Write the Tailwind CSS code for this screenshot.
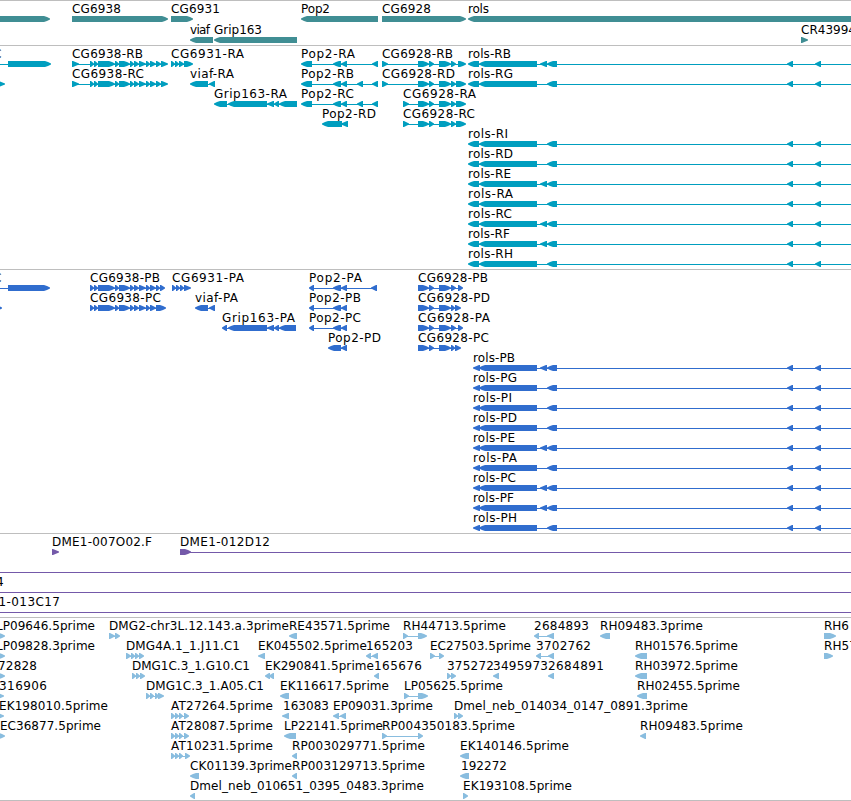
<!DOCTYPE html>
<html lang="en">
<head>
    <meta charset="UTF-8">
    <meta name="viewport" content="width=device-width, initial-scale=1.0">
    <title>Genome browser - chr3L</title>
    <script src="https://cdn.jsdelivr.net/npm/@tailwindcss/browser@4"></script>
</head>
<body class="bg-white overflow-hidden font-['DejaVu_Sans',sans-serif] text-[12px] text-black">

<main class="flex flex-col w-[851px] h-[801px] border-b border-[#bebebe]">
    <section id="genes" class="flex flex-col gap-px pt-px h-[45px] border-t border-[#bebebe] text-[#408e94]"></section>
    <section id="transcripts" class="flex flex-col pt-px h-[224px] border-t border-[#bebebe] text-[#009ebf]"></section>
    <section id="proteins" class="flex flex-col pt-px h-[264px] border-t border-[#bebebe] text-[#306dce]"></section>
    <section id="clones" class="flex flex-col pt-px h-[84px] border-t border-[#bebebe] text-[#7459a9]"></section>
    <section id="ests" class="flex flex-col pt-px h-[183px] border-t border-[#bebebe] text-[#89bddf]"></section>
</main>

<script>
    // feature: [label, x, label width, strand, 'start-end start-end ...']
    const cg6938 = '98-115 115-119 119-130 130-134 134-139 139-146 146-150 150-156 ';
    const cg6928 = '418-429 429-434 439-451 ';
    const rolsTail = '547-557 787-793 815-821 860-866';

    function rols(name, w, extra) {
        const start = name[5] === 'R' ? '468-479 479-537 ' : '473-480 479-537 ';
        return [[name, name[5] === 'R' ? 468 : 473, w, '-', start + (extra ? '540-547 ' : '') + rolsTail]];
    }

    const tracks = {
        genes: [
            [['', 0, 0, '+', '-10-50'], ['CG6938', 72, 49, '+', '72-168'], ['CG6931', 171, 49, '+', '171-193'],
                ['Pop2', 301, 29, '-', '301-378'], ['CG6928', 382, 49, '+', '382-466'], ['rols', 468, 21, '-', '468-870']],
            [['viaf', 190, 20, '-', '190-213'], ['Grip163', 214, 48, '-', '214-297'], ['CR43994', 801, 55, '+', '801-808']]
        ],
        transcripts: [
            [['C', -7, 8, '+', '-9--5 8-51'], ['CG6938-RB', 72, 71, '+', '72-79 90-94 94-98 ' + cg6938 + '156-161 161-168'],
                ['CG6931-RA', 171, 73, '+', '171-175 175-179 179-184 184-193'],
                ['Pop2-RA', 301, 54, '-', '301-312 333-341 341-347 372-378'],
                ['CG6928-RB', 382, 71, '+', '382-388 418-429 429-434 439-451 451-456 458-466'], ...rols('rols-RB', 43, true)],
            [['', 0, 0, '+', '-2-5'], ['CG6938-RC', 72, 72, '+', '72-79 90-94 94-98 ' + cg6938 + '156-161 161-168'],
                ['viaf-RA', 190, 44, '-', '190-208 209-215'],
                ['Pop2-RB', 301, 53, '-', '301-312 333-341 341-347 357-363 372-378'],
                ['CG6928-RD', 382, 73, '+', '382-388 ' + cg6928 + '451-456 456-466'], ...rols('rols-RG', 45)],
            [['Grip163-RA', 214, 73, '-', '214-227 228-267 267-274 274-279 279-297'],
                ['Pop2-RC', 301, 53, '-', '301-312 333-341 341-347 357-363 372-378'],
                ['CG6928-RA', 403, 73, '+', '403-409 ' + cg6928 + '451-456 456-466']],
            [['Pop2-RD', 322, 54, '-', '322-342 341-348'], ['CG6928-RC', 403, 72, '+', '403-409 ' + cg6928 + '451-456 456-466']],
            rols('rols-RI', 40),
            rols('rols-RD', 45),
            rols('rols-RE', 43, true),
            rols('rols-RA', 45),
            rols('rols-RC', 44, true),
            rols('rols-RF', 42, true),
            rols('rols-RH', 45)
        ],
        proteins: [
            [['C', -7, 8, '+', '-9--5 8-50'], ['CG6938-PB', 90, 70, '+', '90-94 94-98 ' + cg6938 + '156-160 160-165'],
                ['CG6931-PA', 172, 72, '+', '172-176 176-180 180-184 184-191'],
                ['Pop2-PA', 309, 53, '-', '309-314 333-341 341-347 371-377'],
                ['CG6928-PB', 418, 70, '+', cg6928 + '451-456 458-463']],
            [['', 0, 0, '+', '-4-2'], ['CG6938-PC', 90, 71, '+', '90-94 94-98 ' + cg6938 + '156-166'],
                ['viaf-PA', 195, 43, '-', '195-208 209-215'],
                ['Pop2-PB', 309, 52, '-', '309-314 333-341 341-347'],
                ['CG6928-PD', 418, 72, '+', cg6928 + '451-455 455-461']],
            [['Grip163-PA', 222, 73, '-', '222-227 228-267 267-274 274-279 279-296'],
                ['Pop2-PC', 309, 52, '-', '309-314 333-341 341-347'],
                ['CG6928-PA', 418, 72, '+', cg6928 + '451-456 458-463']],
            [['Pop2-PD', 328, 53, '-', '328-341 341-347'], ['CG6928-PC', 418, 71, '+', cg6928 + '451-455 455-461']],
            rols('rols-PB', 42, true),
            rols('rols-PG', 44),
            rols('rols-PI', 39),
            rols('rols-PD', 44),
            rols('rols-PE', 42, true),
            rols('rols-PA', 44),
            rols('rols-PC', 43, true),
            rols('rols-PF', 41, true),
            rols('rols-PH', 44)
        ],
        clones: [
            [['DME1-007O02.F', 52, 100, '+', '52-59'], ['DME1-012D12', 180, 90, '+', '180-191 860-870']],
            [['', 0, 0, '+', '-20--10 860-870']],
            [['4', -4, 8, '+', '-20--10 860-870']],
            [['DME1-013C17', -30, 90, '+', '-20--10 860-870']]
        ],
        ests: [
            [['LP09646.5prime', -4, 99, '+', '-3-5'], ['DMG2-chr3L.12.143.a.3prime', 109, 180, '+', '109-115 115-120'],
                ['RE43571.5prime', 289, 101, '-', '289-297'], ['RH44713.5prime', 403, 103, '+', '403-408 418-427'],
                ['2684893', 534, 55, '-', '534-539 547-554'], ['RH09483.3prime', 600, 103, '-', '600-610'],
                ['RH6', 824, 25, '+', '824-836']],
            [['LP09828.3prime', -4, 99, '+', '-3-5'], ['DMG4A.1_1.J11.C1', 126, 114, '+', '126-131 131-135 135-139 139-144'],
                ['EK045502.5prime', 258, 109, '-', '258-265'], ['165203', 366, 47, '-', '366-371 372-378'],
                ['EC27503.5prime', 430, 101, '+', '430-435 439-444'], ['3702762', 536, 55, '-', '536-541 548-554'],
                ['RH01576.5prime', 635, 103, '-', '635-647'], ['RH57', 824, 33, '+', '824-833']],
            [['72828', -2, 39, '+', '-3-5'], ['DMG1C.3_1.G10.C1', 132, 118, '+', '132-136 136-140 140-145'],
                ['EK290841.5prime', 265, 109, '-', '265-270 269-274'], ['165676', 374, 48, '-', '374-379'],
                ['375272', 447, 47, '+', '447-451 451-456'], ['3495973', 493, 55, '-', '493-499'],
                ['2684891', 548, 56, '-', '548-554'], ['RH03972.5prime', 635, 103, '-', '635-647']],
            [['316906', -1, 48, '+', '-3-4'], ['DMG1C.3_1.A05.C1', 146, 118, '+', '146-150 150-154 155-159 158-164'],
                ['EK116617.5prime', 280, 109, '-', '280-289'], ['LP05625.5prime', 404, 99, '+', '404-409 418-428'],
                ['RH02455.5prime', 637, 103, '-', '637-647']],
            [['EK198010.5prime', -1, 109, '+', '-3-4'], ['AT27264.5prime', 171, 102, '+', '171-175 175-179 179-183 184-189'],
                ['163083', 283, 46, '-', '282-289'], ['EP09031.3prime', 333, 100, '-', '333-339 340-346'],
                ['Dmel_neb_014034_0147_0891.3prime', 454, 234, '+', '454-458 458-463']],
            [['EC36877.5prime', 0, 101, '+', '-3-5'], ['AT28087.5prime', 171, 102, '+', '171-175 175-179 179-183 184-189'],
                ['LP22141.5prime', 284, 99, '-', '284-296'], ['RP004350183.5prime', 382, 133, '+', '382-387 418-423'],
                ['RH09483.5prime', 640, 103, '-', '640-646']],
            [['AT10231.5prime', 171, 102, '+', '171-175 175-179 179-183 185-190'],
                ['RP003029771.5prime', 292, 133, '-', '292-297'], ['EK140146.5prime', 460, 109, '-', '460-469']],
            [['CK01139.3prime', 190, 102, '-', '190-199'], ['RP003129713.5prime', 292, 133, '-', '292-297'],
                ['192272', 461, 46, '-', '460-469']],
            [['Dmel_neb_010651_0395_0483.3prime', 190, 234, '-', '190-195'], ['EK193108.5prime', 463, 109, '+', '463-468']]
        ]
    };

    // slim exons are plain triangles, wide ones a bar with a tapered end
    function exonPath(a, b, strand) {
        const slim = b - a <= 7;
        const tip = slim ? b - a : 6;
        const [back, point, dir] = strand === '+' ? [a, b, 1] : [b, a, -1];
        const neck = point - dir * tip;
        if (slim) {
            return `M${back} 14L${back + dir} 14L${point} 16.5V17.5L${back + dir} 20H${back}Z`;
        }
        return `M${back} 14H${neck}L${point - dir * 3} 15L${point} 16.5V17.5L${point - dir * 3} 19L${neck} 20H${back}Z`;
    }

    function drawFeature([label, x, w, strand, spec]) {
        const exons = spec.split(' ').map(s => s.match(/^(-?\d+)-(-?\d+)$/).slice(1).map(Number));
        const first = exons[0][0];
        const last = exons[exons.length - 1][1];
        const line = exons.length > 1 ? `<rect x="${first + 1}" y="17" width="${last - first - 2}" height="1" />` : '';
        const text = label ? `<text class="fill-black" x="${x}" y="11" textLength="${w}">${label}</text>` : '';
        return line + exons.map(([a, b]) => `<path d="${exonPath(a, b, strand)}" />`).join('') + text;
    }

    for (const id in tracks) {
        document.getElementById(id).innerHTML = tracks[id].map(row => `
            <svg class="block shrink-0 w-[851px] h-5 fill-current" viewBox="0 0 851 20">${row.map(drawFeature).join('')}</svg>
        `).join('');
    }
</script>
</body>
</html>
